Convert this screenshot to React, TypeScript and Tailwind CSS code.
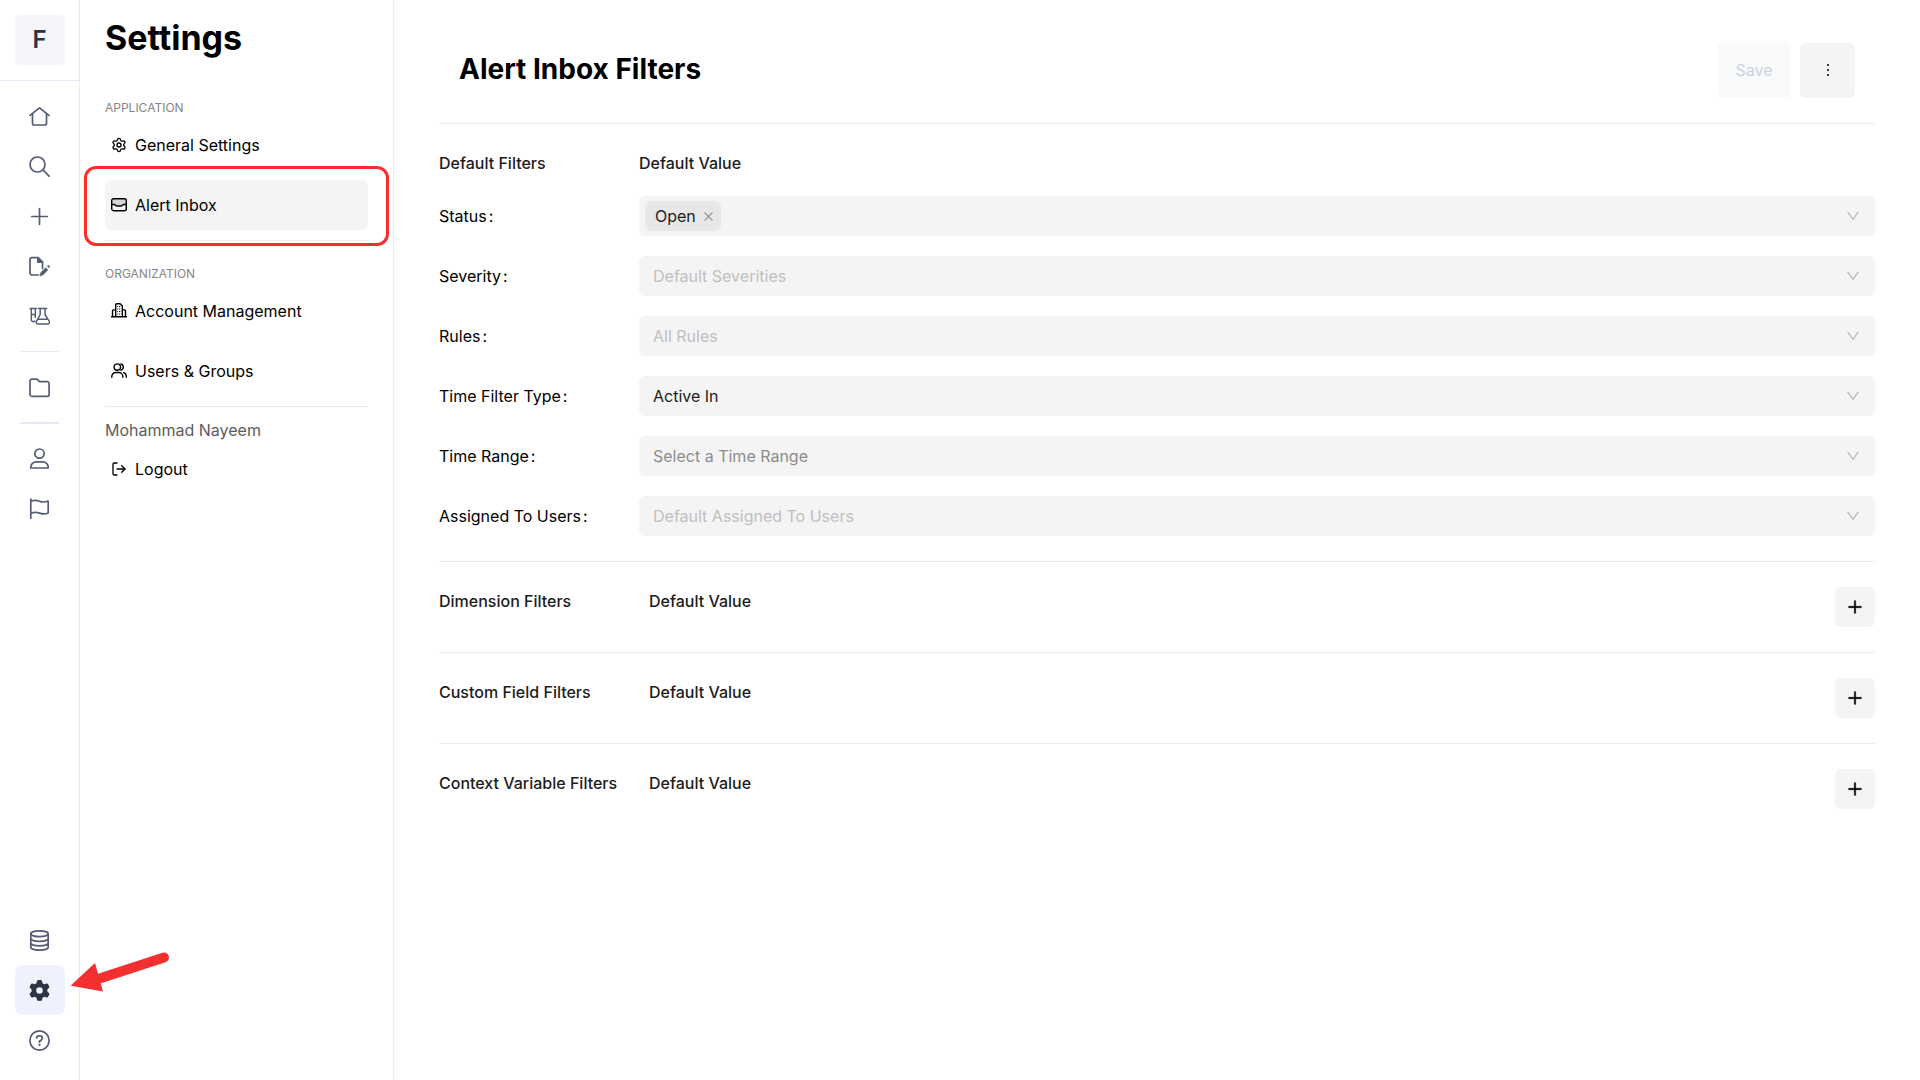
import type { ReactNode } from "react";
import { AiOutlineClose, AiOutlineDown, AiOutlineMore, AiOutlinePlus } from "react-icons/ai";
import { FaGear } from "react-icons/fa6";
import { LogOut, Settings } from "lucide-react";

function RailIcon({ children }: { children: ReactNode }) {
  return (
    <svg
      className="size-[21px]"
      viewBox="0 0 21 21"
      fill="none"
      stroke="currentColor"
      strokeWidth="1.7"
      strokeLinecap="round"
      strokeLinejoin="round"
      aria-hidden="true"
    >
      {children}
    </svg>
  );
}

const mainLinks = [
  {
    label: "Home",
    icon: (
      <RailIcon>
        <path d="M1 9.300 10.500 1.800 20 9.300M3.500 7.600v9.600a1.800 1.800 0 0 0 1.800 1.800h10.400a1.800 1.800 0 0 0 1.800-1.800V7.600" />
      </RailIcon>
    ),
  },
  {
    label: "Search",
    icon: (
      <RailIcon>
        <circle cx="8.500" cy="8.500" r="7.500" />
        <path d="m13.900 13.900 6.200 6.200" />
      </RailIcon>
    ),
  },
  {
    label: "Create",
    icon: (
      <RailIcon>
        <path d="M10.500 2.700v15.600M2.700 10.500h15.600" />
      </RailIcon>
    ),
  },
  {
    label: "Drafts",
    icon: (
      <RailIcon>
        <path d="M9.300 19H2.900A1.900 1.900 0 0 1 1 17.100V3.500a1.900 1.900 0 0 1 1.900-1.900h6.200L13.500 6v6.300" />
        <path d="M8.800 1.600v4.600h4.700z" fill="currentColor" />
        <path
          d="m11 19.700.7-3 5-5 2.200 2.200-5 5zM18.400 10.100l.6-.5a.6.6 0 0 1 .9 0l.6.6a.6.6 0 0 1 0 .9l-.5.6z"
          fill="currentColor"
          strokeWidth=".6"
        />
      </RailIcon>
    ),
  },
  {
    label: "Lab",
    icon: (
      <RailIcon>
        <path d="M1.200 2.500h6.200M2.300 2.500v11.200a2 2 0 0 0 3.500 1.300M6.300 2.500v9M2.300 8.500h4" strokeWidth="1.500" />
        <path
          d="M9.300 2.500h8.400M11.200 2.500v6L7.500 15.300a1.900 1.900 0 0 0 1.700 2.800h9.400a1.900 1.900 0 0 0 1.700-2.800L16 8.500v-6M9 13.200h9.800"
          strokeWidth="1.500"
        />
      </RailIcon>
    ),
  },
];

const folderIcon = (
  <RailIcon>
    <path d="M2.800 2.200h4.700c.5 0 .9.200 1.300.6l1.300 1.300c.4.400.8.600 1.300.6h6.800A1.900 1.900 0 0 1 20.100 6.600v10.800a1.900 1.900 0 0 1-1.900 1.900H2.900A1.900 1.900 0 0 1 1 17.400V4a1.800 1.800 0 0 1 1.800-1.800z" />
  </RailIcon>
);

const userLinks = [
  {
    label: "Profile",
    icon: (
      <RailIcon>
        <circle cx="10.500" cy="5.600" r="4.600" />
        <path d="M1.800 20v-.7a5.500 5.500 0 0 1 5.500-5.500h6.400a5.500 5.500 0 0 1 5.500 5.500v.7z" />
      </RailIcon>
    ),
  },
  {
    label: "Flags",
    icon: (
      <RailIcon>
        <path d="M1.800 1v19.200M1.800 3.200c3-1.100 5.400-1.200 8.700 0s5.600 1 7.800.1a.6.6 0 0 1 .9.600v10.500a1 1 0 0 1-.6.9c-2.400.9-4.800.9-8.100-.2s-5.700-.9-8.700.2" />
      </RailIcon>
    ),
  },
];

const dataIcon = (
  <RailIcon>
    <ellipse cx="10.500" cy="3.800" rx="8.700" ry="2.900" />
    <path d="M1.800 3.800v13.500c0 1.600 3.900 2.900 8.700 2.900s8.700-1.300 8.700-2.900V3.800M1.800 8.400c0 1.600 3.900 2.900 8.700 2.900s8.700-1.300 8.700-2.900M1.800 12.900c0 1.600 3.900 2.900 8.700 2.900s8.700-1.300 8.700-2.900" />
  </RailIcon>
);

const helpIcon = (
  <RailIcon>
    <circle cx="10.500" cy="10.500" r="9.600" />
    <path d="M7.700 7.800c.1-1.100 1-1.900 2.200-1.900h1.100a2.300 2.300 0 0 1 1.200 4.300l-1.700 1.100v.7" strokeWidth="1.900" />
    <circle cx="10.500" cy="14.800" r=".5" fill="currentColor" strokeWidth="1.300" />
  </RailIcon>
);

function MenuIcon({ children }: { children: ReactNode }) {
  return (
    <svg
      className="size-4"
      viewBox="0 0 16 16"
      fill="none"
      stroke="currentColor"
      strokeWidth="1.400"
      strokeLinejoin="round"
      aria-hidden="true"
    >
      {children}
    </svg>
  );
}

const inboxIcon = (
  <MenuIcon>
    <path d="M.8 7.500V4.200a2 2 0 0 1 2-2h10.400a2 2 0 0 1 2 2v3.300H12L10.800 9H5.200L4 7.500z" fill="#d4d4d4" stroke="none" />
    <rect x=".7" y="1.700" width="14.600" height="12" rx="2" />
    <path d="M.7 7.500h2.600c.6 0 .8.300 1.100.7.300.5.700.8 1.300.8h4.600c.6 0 1-.3 1.300-.8.300-.4.5-.7 1.100-.7h2.600" />
  </MenuIcon>
);

const buildingIcon = (
  <MenuIcon>
    <path d="M0 13.800h16M4.700 13.800V1.700c0-.6.400-1 1-1h3.400l2.200 2v11.100M1.500 13.800V7.900c0-.6.400-1 1-1h2.200M14.500 13.800V7.900c0-.6-.4-1-1-1h-2.200" />
    <path d="M8 3.500h1.300M6.300 3.500h.8M8 6h1.300M6.300 6h.8M8 8.500h1.300M6.300 8.500h.8M8 11h1.300M6.300 11h.8" strokeWidth="1.200" />
  </MenuIcon>
);

const usersIcon = (
  <MenuIcon>
    <circle cx="6.300" cy="4.100" r="3.200" />
    <path
      d="M.8 14.300v-.8a4 4 0 0 1 4-4h3a4 4 0 0 1 4 4v.8M9.900 1a3.200 3.200 0 0 1 0 6.200M12.600 9.600a3.600 3.600 0 0 1 2.600 3.500v1.200"
      strokeLinecap="round"
    />
  </MenuIcon>
);

function RailButton({ label, children }: { label: string; children: ReactNode }) {
  return (
    <button type="button" aria-label={label} className="flex size-[50px] items-center justify-center rounded-lg">
      {children}
    </button>
  );
}

function Rail() {
  return (
    <nav className="flex w-20 shrink-0 flex-col border-r border-[#e8e9f7] text-[#555d75]">
      <div className="flex h-[81px] items-center justify-center border-b border-[#e8e9f7]">
        <button type="button" className="size-[50px] rounded-md bg-[#f4f6fa] text-2xl font-semibold text-[#2b3245]">
          F
        </button>
      </div>
      <div className="flex flex-1 flex-col items-center pt-2.5 pb-[15px]">
        {mainLinks.map((link) => (
          <RailButton key={link.label} label={link.label}>
            {link.icon}
          </RailButton>
        ))}
        <hr className="my-2.5 w-[39px] border-[#e6e8f7]" />
        <RailButton label="Folders">{folderIcon}</RailButton>
        <hr className="mt-2.5 mb-[9px] w-[39px] border-t-2 border-[#e6e8f7]" />
        {userLinks.map((link) => (
          <RailButton key={link.label} label={link.label}>
            {link.icon}
          </RailButton>
        ))}
        <div className="mt-auto">
          <RailButton label="Data">{dataIcon}</RailButton>
          <div className="relative rounded-lg bg-[#f0f1ff] text-[#2f3444]">
            <RailButton label="Settings">
              <FaGear className="size-[21px]" />
            </RailButton>
            <svg className="pointer-events-none absolute -top-4 left-14 z-10 h-11 w-[100px]" viewBox="0 0 100 44" aria-hidden="true">
              <path d="M27 30 93 8.500" stroke="#f3302f" strokeWidth="10" strokeLinecap="round" />
              <path d="M-.5 36.700 24 14l8 28.500z" fill="#f3302f" />
            </svg>
          </div>
          <RailButton label="Help">{helpIcon}</RailButton>
        </div>
      </div>
    </nav>
  );
}

interface MenuLinkProps {
  icon: ReactNode;
  label: string;
  active?: boolean;
}

function MenuLink({ icon, label, active }: MenuLinkProps) {
  return (
    <div className="relative">
      <a
        href="#"
        aria-current={active ? "page" : undefined}
        className={`flex h-[50px] items-center gap-2 rounded-md px-1.5 text-base text-black ${active ? "bg-[#f4f4f4]" : ""}`}
      >
        {icon}
        {label}
      </a>
      {active && (
        <span className="pointer-events-none absolute -inset-x-[21px] -top-3.5 -bottom-4 rounded-xl border-3 border-[#f3302f]" />
      )}
    </div>
  );
}

function SettingsMenu() {
  return (
    <aside className="w-[314px] shrink-0 border-r border-[#ececf4] px-[25px]">
      <h1 className="pt-4 text-[34px] leading-[44px] font-bold text-black">Settings</h1>
      <h2 className="mt-[38px] text-xs leading-5 text-[#858585]">APPLICATION</h2>
      <div className="mt-0.5 flex flex-col gap-2.5">
        <MenuLink icon={<Settings className="size-4" />} label="General Settings" />
        <MenuLink icon={inboxIcon} label="Alert Inbox" active />
      </div>
      <hr className="mt-2.5 border-[#ececec]" />
      <h2 className="mt-[23px] text-xs leading-5 text-[#858585]">ORGANIZATION</h2>
      <div className="mt-0.5 flex flex-col gap-2.5">
        <MenuLink icon={buildingIcon} label="Account Management" />
        <MenuLink icon={usersIcon} label="Users & Groups" />
      </div>
      <hr className="mt-2.5 border-[#ececec]" />
      <p className="mt-[11px] text-base leading-6 text-[#5c5c5c]">Mohammad Nayeem</p>
      <div className="mt-0.5">
        <MenuLink icon={<LogOut className="size-4" />} label="Logout" />
      </div>
    </aside>
  );
}

const filters = [
  { id: "severity", label: "Severity", value: "Default Severities", color: "text-[#bfbfbf]" },
  { id: "rules", label: "Rules", value: "All Rules", color: "text-[#bfbfbf]" },
  { id: "time-type", label: "Time Filter Type", value: "Active In", color: "text-[#1c1c1c]" },
  { id: "time-range", label: "Time Range", value: "Select a Time Range", color: "text-[#8c8c8c]" },
  { id: "assigned", label: "Assigned To Users", value: "Default Assigned To Users", color: "text-[#bfbfbf]" },
];

const extraFilters = ["Dimension Filters", "Custom Field Filters", "Context Variable Filters"];

function FilterRow({ id, label, children }: { id: string; label: string; children: ReactNode }) {
  return (
    <div className="flex h-10 items-center">
      <label htmlFor={id} className="w-[200px] shrink-0 text-black">
        {label}
        <span className="ml-0.5">:</span>
      </label>
      <div className="relative flex h-full flex-1 items-center rounded-md bg-[#f4f4f4]">
        {children}
        <AiOutlineDown className="pointer-events-none absolute right-3.5 size-4 text-[#b8b8b8]" />
      </div>
    </div>
  );
}

export default function App() {
  return (
    <div className="flex min-h-screen bg-white font-['Inter',sans-serif] text-base text-[#1c1c1c]">
      <Rail />
      <SettingsMenu />
      <main className="min-w-0 flex-1 px-[45px] pt-[43px]">
        <header className="flex items-start justify-between border-b border-[#ececec] px-5 pb-[25px]">
          <h2 className="pt-2 text-[28px] leading-9 font-bold text-black">Alert Inbox Filters</h2>
          <div className="flex gap-[9px]">
            <button type="button" disabled className="h-[55px] w-[74px] rounded-md bg-[#f8fafc] pb-0.5 text-[#cbd2e0]">
              Save
            </button>
            <button
              type="button"
              aria-label="More"
              className="flex size-[55px] items-center justify-center rounded-md bg-[#f4f4f4] pb-0.5 text-black"
            >
              <AiOutlineMore className="size-[18px]" />
            </button>
          </div>
        </header>

        <section className="pt-[27px] pb-[25px]">
          <div className="mb-[21px] flex font-medium">
            <h3 className="w-[200px]">Default Filters</h3>
            <h3>Default Value</h3>
          </div>
          <div className="flex flex-col gap-5">
            <FilterRow id="status" label="Status">
              <span className="ml-1.5 flex h-[30px] items-center gap-1.5 rounded-md bg-[#e7e7e7] pr-1.5 pl-2.5">
                Open
                <button type="button" aria-label="Remove Open">
                  <AiOutlineClose className="size-[13px] text-[#8a8a8a]" />
                </button>
              </span>
              <input id="status" type="text" className="h-full min-w-0 flex-1 bg-transparent px-2 outline-none" />
            </FilterRow>
            {filters.map((filter) => (
              <FilterRow key={filter.id} id={filter.id} label={filter.label}>
                <select id={filter.id} className={`size-full appearance-none rounded-md bg-transparent px-3.5 outline-none ${filter.color}`}>
                  <option>{filter.value}</option>
                </select>
              </FilterRow>
            ))}
          </div>
        </section>

        {extraFilters.map((name) => (
          <section key={name} className="flex h-[91px] items-start border-t border-[#ececec] pt-[25px]">
            <h3 className="w-[210px] shrink-0 pt-0.5 font-medium">{name}</h3>
            <h3 className="flex-1 pt-0.5 font-medium">Default Value</h3>
            <button
              type="button"
              aria-label={`Add ${name}`}
              className="flex size-10 items-center justify-center rounded-md bg-[#f4f4f4] text-black"
            >
              <AiOutlinePlus className="size-[18px]" strokeWidth="30" />
            </button>
          </section>
        ))}
      </main>
    </div>
  );
}
